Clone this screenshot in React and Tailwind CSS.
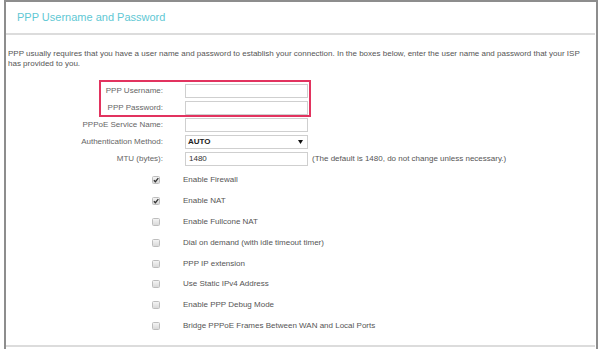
import React from "react";

const font = { fontFamily: '"Liberation Sans", Arial, sans-serif' };

const Field = ({ value }) => (
  <div className="h-[14px] w-[123px] border border-[#cfcfcf] bg-white pl-[3px] text-[8px] leading-[12px] text-[#333]">
    {value}
  </div>
);

const Check = ({ checked }) => (
  <span className="flex h-[8px] w-[8px] items-center justify-center rounded-[1.5px] border border-[#bdbdbd] bg-gradient-to-b from-[#f4f4f4] to-[#d9d9d9]">
    {checked && (
      <svg width="7" height="6" viewBox="0 0 7 6">
        <path d="M1 3.2 L2.8 5 L6.2 0.8" fill="none" stroke="#333" strokeWidth="1.5" />
      </svg>
    )}
  </span>
);

const options = [
  ["Enable Firewall", true],
  ["Enable NAT", true],
  ["Enable Fullcone NAT", false],
  ["Dial on demand (with idle timeout timer)", false],
  ["PPP IP extension", false],
  ["Use Static IPv4 Address", false],
  ["Enable PPP Debug Mode", false],
  ["Bridge PPPoE Frames Between WAN and Local Ports", false],
];

export default function App() {
  return (
    <div className="h-[349px] w-[600px] overflow-hidden bg-white" style={font}>
      <div className="ml-[4px] h-[360px] w-[594px] border-x-2 border-t-2 border-[#8d8d8d]">
        <div className="flex h-[31px] items-center pl-[11px] text-[11px] text-[#5fc8d4]">
          PPP Username and Password
        </div>
        <div className="mr-[1px] h-[2px] bg-[#dcdcdc]" />

        <p className="mt-[14px] pl-[2px] pr-[12px] text-[8px] leading-[10px] text-[#555]">
          PPP usually requires that you have a user name and password to establish your connection. In the
          boxes below, enter the user name and password that your ISP has provided to you.
        </p>

        <div className="mt-[11px] text-[8px] text-[#666]">
          <div className="ml-[93px] flex w-[212px] flex-col gap-[3px] border-2 border-[#e2335f] pt-[2px]">
            <div className="flex h-[14px] items-center">
              <span className="w-[62px] text-right">PPP Username:</span>
              <span className="ml-[22px]"><Field /></span>
            </div>
            <div className="flex h-[14px] items-center">
              <span className="w-[62px] text-right">PPP Password:</span>
              <span className="ml-[22px]"><Field /></span>
            </div>
          </div>

          <div className="mt-[1px] flex flex-col gap-[3px]">
            <div className="flex h-[14px] items-center">
              <span className="w-[157px] text-right">PPPoE Service Name:</span>
              <span className="ml-[22px]"><Field /></span>
            </div>
            <div className="flex h-[14px] items-center">
              <span className="w-[157px] text-right">Authentication Method:</span>
              <div className="ml-[22px] flex h-[14px] w-[123px] items-center justify-between border border-[#cfcfcf] pl-[2px] pr-[4px] text-[8px] font-bold text-[#222]">
                AUTO
                <svg width="5" height="4" viewBox="0 0 5 4">
                  <path d="M0 0 H5 L2.5 4 Z" fill="#111" />
                </svg>
              </div>
            </div>
            <div className="flex h-[14px] items-center">
              <span className="w-[157px] text-right">MTU (bytes):</span>
              <span className="ml-[22px]"><Field value="1480" /></span>
              <span className="ml-[4px] text-[#555]">(The default is 1480, do not change unless necessary.)</span>
            </div>
          </div>

          <div className="mt-[4px] flex flex-col text-[#555]">
            {options.map(([label, on]) => (
              <div key={label} className="flex h-[20.8px] items-center">
                <span className="ml-[146px]"><Check checked={on} /></span>
                <span className="ml-[23px]">{label}</span>
              </div>
            ))}
          </div>
        </div>

        <div className="mr-[1px] mt-[9px] h-[2px] bg-[#dcdcdc]" />
      </div>
    </div>
  );
}
